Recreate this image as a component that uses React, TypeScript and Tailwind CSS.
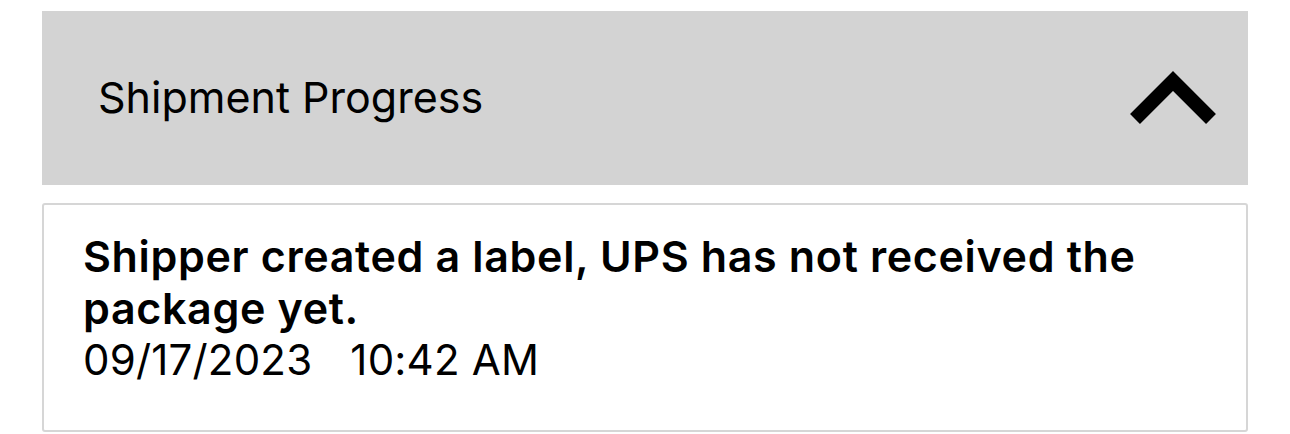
const ChevronUp = () => {
  return (
    <svg width="90" height="60" viewBox="0 0 90 60" className="shrink-0">
      <polyline
        points="7,51 45,13 83,51"
        fill="none"
        stroke="#000"
        strokeWidth="14"
        strokeLinejoin="miter"
        strokeLinecap="butt"
      />
    </svg>
  );
};

const ProgressEntry = ({
  status,
  date,
  time
}: {
  status: string;
  date: string;
  time: string;
}) => {
  return (
    <div className="mt-[18px] border-2 border-[#d6d6d6] rounded-[3px] bg-white pl-[39px] pr-[39px] pt-[25px] pb-[44px]">
      <p className="font-semibold text-[43px] leading-[52px] tracking-[0.65px] text-black">
        {status}
      </p>

      <p className="text-[42px] leading-[52px] tracking-[0.2px] text-black">
        <span>{date}</span>
        <span className="ml-[38px]">{time}</span>
      </p>
    </div>
  );
};

const App = () => {
  return (
    <div
      className="min-h-screen bg-white pt-[11px] px-[42px]"
      style={{ fontFamily: "Inter, 'Liberation Sans', sans-serif" }}
    >
      <div className="h-[174px] bg-[#d3d3d3] flex items-center justify-between pl-[56px] pr-[30px]">
        <p className="text-[43px] text-black -mt-[2px]">
          Shipment Progress
        </p>

        <ChevronUp />
      </div>

      <ProgressEntry
        status="Shipper created a label, UPS has not received the package yet."
        date="09/17/2023"
        time="10:42 AM"
      />
    </div>
  );
};

export default App;
